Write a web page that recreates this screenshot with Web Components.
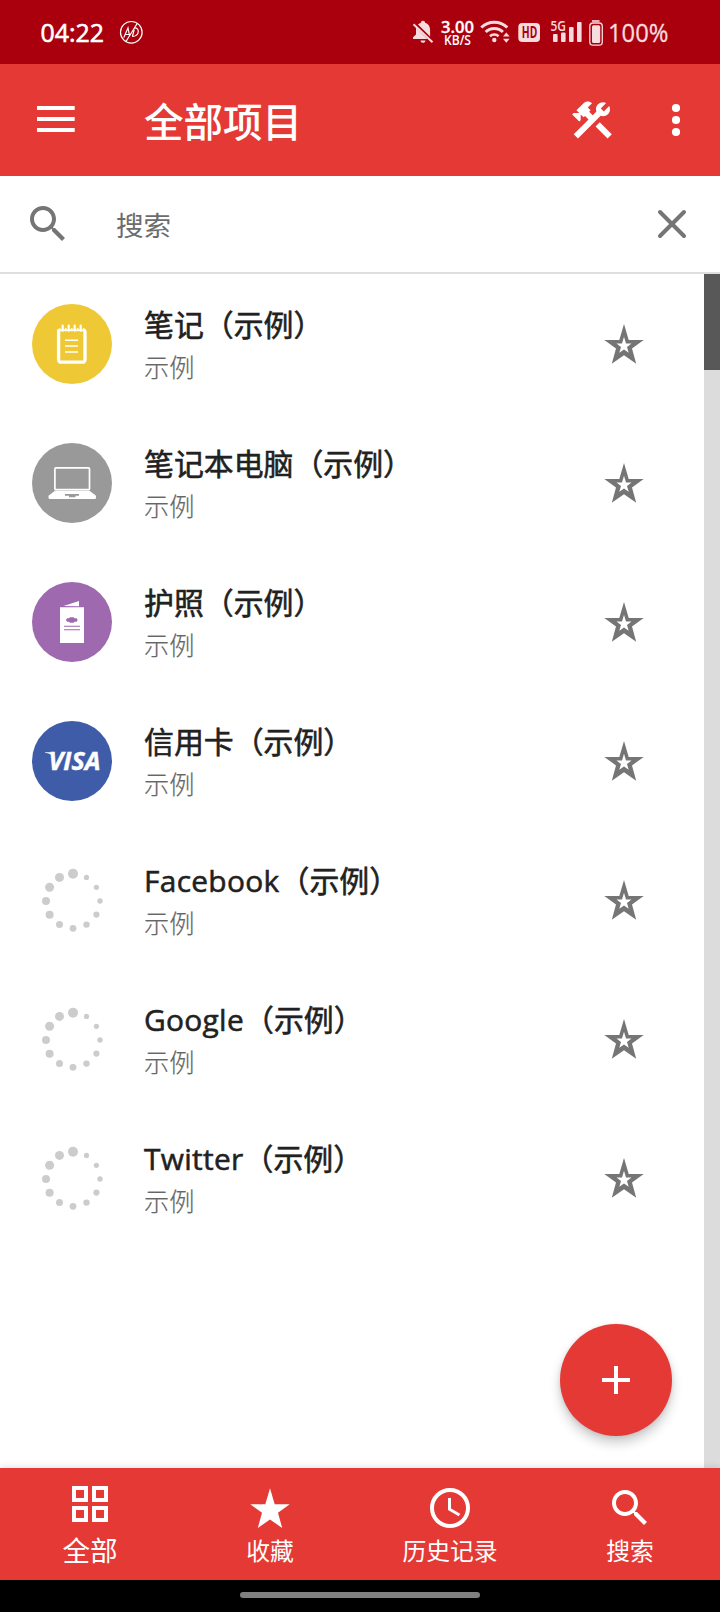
<!DOCTYPE html>
<html lang="zh-CN">
<head>
<meta charset="utf-8">
<title>全部项目</title>
<style>
html,body{margin:0;padding:0}
body{width:720px;height:1612px;overflow:hidden;background:#fff;font-family:"Open Sans","Noto Sans CJK SC",sans-serif;--red:#e53935;--deep:#aa000d;--grey:#757575}
</style>
</head>
<body>
<vault-app></vault-app>
<script>
const define = (name, html) => {
  const t = document.createElement('template');
  t.innerHTML = html;
  customElements.define(name, class extends HTMLElement {
    constructor() {
      super();
      this.attachShadow({mode: 'open'}).append(t.content.cloneNode(true));
    }
  });
};

define('status-bar', `
<style>
:host{display:flex;height:64px;background:var(--deep);color:#fff}
svg{display:block}
text{font-family:"Open Sans","Noto Sans",sans-serif}
</style>
<svg width="720" height="64" viewBox="0 0 720 64">
  <text x="40.5" y="41.5" font-size="25" fill="#fff" stroke="#fff" stroke-width=".6" textLength="63.5" lengthAdjust="spacingAndGlyphs">04:22</text>
  <g fill="none" stroke="#fff" stroke-width="1.2">
    <circle cx="131.3" cy="32.3" r="10.8"/>
    <path d="M137.5 23L126 41.5"/>
    <path d="M123.8 37.5L128 28l1.5 7.5M125.5 34.5h5M134 28c6-1 6 8-1.8 8.5M134.2 29.5l-1.8 7"/>
  </g>
  <g fill="#f6dbdf">
    <path d="M423 20.8c1.300 0 2 .8 2.100 2 3.400 1.100 5 3.800 5 7.200v6.600L418 24.500c.8-.9 1.800-1.400 2.900-1.700.1-1.200.8-2 2.100-2zM416 27.500L427.500 39H413v-1.800l3-2.600zM420.500 40.500h5c-.3 1.600-1.100 2.300-2.500 2.300s-2.200-.7-2.500-2.300z"/>
    <path d="M413.500 24.200L432.500 42.200" stroke="#f6dbdf" stroke-width="2"/>
  </g>
  <g fill="#fff">
    <text x="441" y="33.300" font-size="16.500" font-weight="600" stroke="#fff" stroke-width=".3" textLength="33" lengthAdjust="spacingAndGlyphs">3.00</text>
    <text x="444" y="44.600" font-size="13.500" font-weight="600" textLength="27" lengthAdjust="spacingAndGlyphs">KB/S</text>
  </g>
  <g fill="none" stroke="#f6dbdf" stroke-width="3">
    <path d="M481.300 27.500a18.500 18.500 0 0 1 26 0"/>
    <path d="M485.700 32a12.200 12.200 0 0 1 17.200 0"/>
    <path d="M490 36.300a6.200 6.200 0 0 1 8.600 0" stroke-width="2.600"/>
  </g>
  <g fill="#f6dbdf">
    <circle cx="494.300" cy="40" r="2.200"/>
    <path d="M503 36.500l3.300-4 3.300 4zM503 38.700l3.300 4 3.300-4z"/>
    <rect x="518.300" y="23" width="21.700" height="19" rx="4"/>
    <text x="521.800" y="38.300" font-size="16" font-weight="700" fill="#aa000d" textLength="15.500" lengthAdjust="spacingAndGlyphs">HD</text>
    <text x="550.500" y="31.200" font-size="14" font-weight="600" textLength="15.500" lengthAdjust="spacingAndGlyphs">5G</text>
    <rect x="553" y="34" width="4.600" height="8" rx="1"/>
    <rect x="561" y="32.500" width="4.600" height="9.500" rx="1"/>
    <rect x="569" y="27" width="4.600" height="15" rx="1"/>
    <rect x="577" y="22" width="4.600" height="20" rx="1"/>
    <path d="M592 20.200h7.500v1.600H592z"/>
    <rect x="592" y="25.300" width="8.200" height="17.600" rx="1.500"/>
    <rect x="589.800" y="23" width="12.500" height="22.200" rx="3.200" fill="none" stroke="#f6dbdf" stroke-width="1.300"/>
    <text x="608" y="42" font-size="25.500" stroke="#f6dbdf" stroke-width=".3" textLength="60.500" lengthAdjust="spacingAndGlyphs">100%</text>
  </g>
</svg>`);

define('app-bar', `
<style>
:host{display:flex;height:112px;background:var(--red);color:#fff;box-sizing:border-box;padding:0 20px 0 32px;align-items:center}
svg{display:block;fill:#fff}
h1{margin:0 0 0 64px;flex:1;font-size:39.5px;line-height:56px;font-weight:500;padding-top:3px}
.more{margin-left:36px}
</style>
<svg width="48" height="48" viewBox="0 0 48 48"><path d="M5 10h37.700v4H5zM5 21h37.700v4H5zM5 32h37.700v4H5z"/></svg>
<h1><slot></slot></h1>
<svg width="48" height="48" viewBox="0 0 24 24"><path d="M13.780 15.300L19.780 21.300L21.890 19.140L15.890 13.140L13.780 15.300M17.500 10.100C17.110 10.100 16.690 10.050 16.360 9.910L4.970 21.250L2.860 19.140L10.270 11.740L8.500 9.960L7.780 10.660L6.330 9.250V12.110L5.630 12.810L2.110 9.250L2.810 8.550H5.620L4.220 7.140L7.780 3.580C8.950 2.410 10.830 2.410 12 3.580L9.890 5.740L11.300 7.140L10.590 7.850L12.380 9.630L14.200 7.750C14.060 7.420 14 7 14 6.630C14 4.660 15.560 3.110 17.500 3.110C18.090 3.110 18.610 3.250 19.080 3.530L16.410 6.200L17.910 7.700L20.580 5.030C20.860 5.500 21 6 21 6.630C21 8.550 19.450 10.100 17.500 10.100Z"/></svg>
<svg class="more" width="48" height="48" viewBox="0 0 48 48"><circle cx="24" cy="12" r="4.100"/><circle cx="24" cy="24" r="4.100"/><circle cx="24" cy="36" r="4.100"/></svg>`);

const MAGNIFIER = '<path d="M15.500 14h-.79l-.28-.27C15.410 12.590 16 11.110 16 9.500 16 5.910 13.090 3 9.500 3S3 5.910 3 9.500 5.910 16 9.500 16c1.610 0 3.090-.59 4.230-1.570l.27.28v.79l5 4.990L20.490 19l-4.990-5zm-6 0C7.010 14 5 11.990 5 9.500S7.010 5 9.500 5 14 7.010 14 9.500 11.990 14 9.500 14z"/>';

define('search-bar', `
<style>
:host{display:flex;height:98px;box-sizing:border-box;border-bottom:2px solid #dedede;align-items:center;padding:0 24px;color:#757575}
svg{display:block;fill:currentColor}
span{flex:1;margin-left:44px;font-size:27.6px;line-height:40px;padding-top:2px;color:#6c6c6c}
</style>
<svg width="48" height="48" viewBox="0 0 24 24">${MAGNIFIER}</svg>
<span><slot></slot></span>
<svg width="48" height="48" viewBox="0 0 48 48"><path d="M12 12L36 36M36 12L12 36" stroke="currentColor" stroke-width="4" stroke-linecap="round"/></svg>`);

const dots = [5,2.6,2.6,2.700,3.100,3.200,3.400,3.500,4,4,4.500,4.500].map((r, i) => {
  const a = i * Math.PI / 6;
  return `<circle cx="${(41 + 27 * Math.sin(a)).toFixed(1)}" cy="${(41 - 27.300 * Math.cos(a)).toFixed(1)}" r="${r}"/>`;
}).join('');

const art = {
  note: `<circle cx="40" cy="40" r="40" fill="#efc935"/><rect x="26.600" y="25.600" width="26.400" height="32.600" rx="2.500" fill="none" stroke="#fff" stroke-width="3.300"/>
    <path d="M30.700 21v6.500M36.700 21v6.500M42.700 21v6.500M48.700 21v6.500" stroke="#efc935" stroke-width="4.400"/>
    <path d="M30.700 21.500v5.200M36.700 21.500v5.200M42.700 21.500v5.200M48.700 21.500v5.200" stroke="#fff" stroke-width="2.200" stroke-linecap="round"/>
    <path d="M25 26.200h28.500" stroke="#fff" stroke-width="1.600"/>
    <path d="M33 36.200h13M33 42h13M33 48h13" stroke="#fff" stroke-width="1.500"/>`,
  laptop: `<circle cx="40" cy="40" r="40" fill="#999"/><rect x="22.900" y="24.900" width="34.600" height="21.800" rx="1" fill="none" stroke="#fff" stroke-width="1.700"/>
    <path fill="#fff" d="M23 47.800h34.500l6.500 5v2q0 1.300-1.500 1.300H18q-1.500 0-1.500-1.300v-2z"/><path fill="#999" d="M33 51h14v1.700h-3.500v1.500h-6.500v-1.500H33z"/>`,
  passport: `<circle cx="40" cy="40" r="40" fill="#9e69af"/><path fill="#fff" d="M28 25.200h24V61H28zM31.500 24L47 19v5.200z"/>
    <path fill="#9e69af" d="M34 38l1-1.800h2L38 35.200h3.600l1 1h2l1 1.800-1 1.800h-2l-1 1H38l-1-1h-2z"/>
    <path d="M32 44.200h16M32 47.700h16" stroke="#9e69af" stroke-width="1.100"/>`,
  visa: `<circle cx="40" cy="40" r="40" fill="#3f5ca8"/><text x="16.500" y="48.600" font-family="Open Sans" font-style="italic" font-weight="700" font-size="24.500" fill="#fff" stroke="#fff" stroke-width=".4" textLength="52" lengthAdjust="spacingAndGlyphs">VISA</text><path fill="#fff" d="M13 31.200h7.500l1.500 5q-3.500-3.900-9-4.400z"/>`,
  loading: `<g fill="#ccc">${dots}</g>`
};

customElements.define('item-icon', class extends HTMLElement {
  connectedCallback() {
    if (this.shadowRoot) return;
    this.attachShadow({mode: 'open'}).innerHTML = `<style>:host{display:block;width:80px;height:80px}svg{display:block}</style><svg width="80" height="80" viewBox="0 0 80 80">${art[this.getAttribute('kind')]}</svg>`;
  }
});

const STAR = 'M20 0L24.700 16H39.700L28 24.400L32.200 39.700L20 31.200L7.800 39.700L12 24.400L.3 16H15.300z';

define('vault-item', `
<style>
:host{display:flex;height:139px;box-sizing:border-box;padding:30px 60px 0 32px;align-items:flex-start}
.text{flex:1;margin-left:32px;white-space:nowrap}
.title{font-size:29.9px;line-height:42px;font-weight:400;color:#212121;-webkit-text-stroke:.55px #212121}
.title.latin{letter-spacing:.25px}
.sub{font-size:25.2px;line-height:40px;font-weight:300;color:#666;display:block;padding-top:1px;-webkit-text-stroke:.2px #666}
svg{display:block;margin-top:20px;fill:#757575}
</style>
<slot name="icon"></slot>
<div class="text"><div class="title"><slot></slot></div><slot class="sub" name="sub"></slot></div>
<svg width="40" height="40" viewBox="0 0 40 40"><path fill-rule="evenodd" d="${STAR}M20 12.800L22 19.500H27.500L23 23L24.700 28.700L20 25.400L15.300 28.700L17 23L12.500 19.500H18z"/></svg>`);

define('scroll-track', `
<style>
:host{display:block;width:16px;background:#dcdcdc}
div{height:96px;background:#585858}
</style><div></div>`);

define('add-button', `
<style>
:host{display:flex;width:112px;height:112px;border-radius:50%;background:var(--red);align-items:center;justify-content:center;box-shadow:0 7px 12px rgba(0,0,0,.2),0 1px 4px rgba(0,0,0,.1)}
</style><svg width="28" height="28"><path fill="#fff" d="M12 0h4v12h12v4H16v12h-4V16H0v-4h12z"/></svg>`);

const glyphs = {
  all: '<path fill="none" stroke="#fff" stroke-width="4" d="M8 8h12v12H8zM28 8h12v12H28zM8 28h12v12H8zM28 28h12v12H28z"/>',
  star: `<path transform="translate(4 4.300)" d="${STAR}"/>`,
  clock: '<circle cx="24" cy="24" r="18" fill="none" stroke="#fff" stroke-width="4"/><path fill="none" stroke="#fff" stroke-width="3" d="M23.500 14v11.200L33.500 31"/>',
  search: `<g transform="scale(2)">${MAGNIFIER}</g>`
};

customElements.define('nav-item', class extends HTMLElement {
  connectedCallback() {
    if (this.shadowRoot) return;
    const on = this.hasAttribute('selected');
    this.attachShadow({mode: 'open'}).innerHTML = `<style>
:host{display:flex;flex:1;flex-direction:column;align-items:center;color:#fff;padding-top:${on ? 12 : 16}px;box-sizing:border-box}
svg{display:block;fill:#fff}
span{font-size:${on ? 27.6 : 23.8}px;line-height:${on ? 40 : 36}px;margin-top:${on ? 2 : 1}px}
</style><svg width="48" height="48" viewBox="0 0 48 48">${glyphs[this.getAttribute('kind')]}</svg><span><slot></slot></span>`;
  }
});

define('bottom-nav', `
<style>:host{display:flex;height:112px;background:var(--red);box-shadow:0 -1px 7px rgba(0,0,0,.12);position:relative}</style><slot></slot>`);

define('gesture-bar', `
<style>:host{display:flex;height:32px;background:#000;justify-content:center;align-items:flex-start;position:relative}
div{width:240px;height:6px;margin-top:12px;border-radius:3px;background:#808080}</style><div></div>`);

const items = [['note','笔记（示例）'],['laptop','笔记本电脑（示例）'],['passport','护照（示例）'],['visa','信用卡（示例）'],['loading','Facebook（示例）'],['loading','Google（示例）'],['loading','Twitter（示例）']];

define('vault-app', `
<style>
:host{display:flex;flex-direction:column;width:720px;height:1612px;position:relative}
main{flex:1;display:flex;min-height:0}
.list{flex:1}
.latin{letter-spacing:.3px}
add-button{position:absolute;right:48px;bottom:176px}
</style>
<status-bar></status-bar>
<app-bar>全部项目</app-bar>
<search-bar>搜索</search-bar>
<main><div class="list">${items.map(([k, t]) => `<vault-item><item-icon slot="icon" kind="${k}"></item-icon>${t.replace(/^[A-Za-z]+/, m => `<span class="latin">${m}</span>`)}<span slot="sub">示例</span></vault-item>`).join('')}</div><scroll-track></scroll-track></main>
<add-button></add-button>
<bottom-nav>
  <nav-item kind="all" selected>全部</nav-item>
  <nav-item kind="star">收藏</nav-item>
  <nav-item kind="clock">历史记录</nav-item>
  <nav-item kind="search">搜索</nav-item>
</bottom-nav>
<gesture-bar></gesture-bar>`);
</script>
</body>
</html>
